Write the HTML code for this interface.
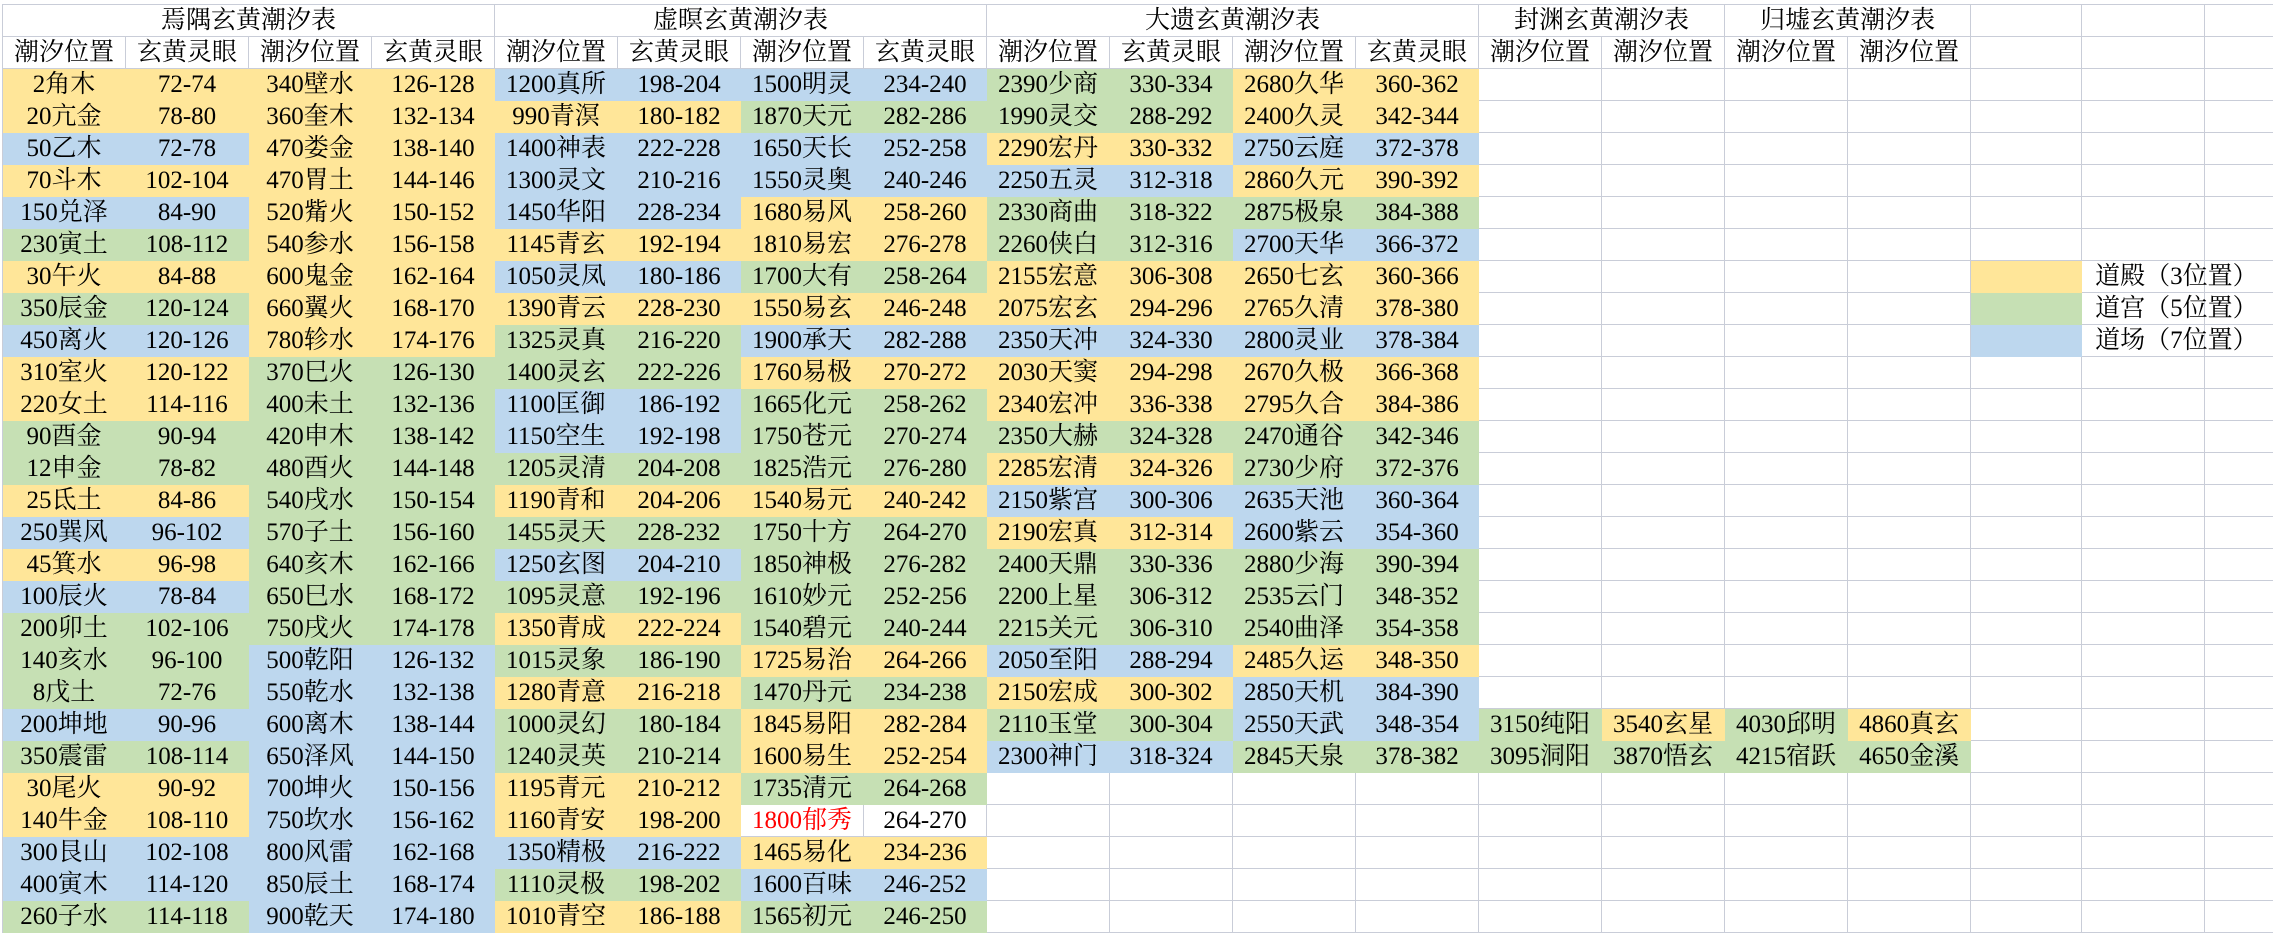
<!DOCTYPE html>
<html><head><meta charset="utf-8"><style>
html,body{margin:0;padding:0;background:#fff;width:2273px;height:938px;overflow:hidden}
table{position:absolute;left:2px;top:4px;border-collapse:separate;border-spacing:0;border-top:1px solid #c9cdd8;border-left:1px solid #c9cdd8;table-layout:fixed;width:2340px}
td{height:31px;padding:0;border-right:1px solid #c9cdd8;border-bottom:1px solid #c9cdd8;text-align:center;white-space:nowrap;overflow:visible;font-family:"Liberation Serif","Noto Serif CJK SC",serif;font-size:25px;line-height:31px;color:#000}
.y{background:#FFE699;border-color:#FFE699}
.g{background:#C6E0B4;border-color:#C6E0B4}
.b{background:#BDD7EE;border-color:#BDD7EE}
.t{background:#fff}
.l{text-align:left;padding-left:13px;overflow:visible}
.r{color:#ff0000}
</style></head><body>
<table>
<colgroup><col style="width:123px"><col style="width:123px"><col style="width:123px"><col style="width:123px"><col style="width:123px"><col style="width:123px"><col style="width:123px"><col style="width:123px"><col style="width:123px"><col style="width:123px"><col style="width:123px"><col style="width:123px"><col style="width:123px"><col style="width:123px"><col style="width:123px"><col style="width:123px"><col style="width:111px"><col style="width:123px"><col style="width:138px"></colgroup>
<tr><td colspan="4" class="t">焉隅玄黄潮汐表</td><td colspan="4" class="t">虚暝玄黄潮汐表</td><td colspan="4" class="t">大遗玄黄潮汐表</td><td colspan="2" class="t">封渊玄黄潮汐表</td><td colspan="2" class="t">归墟玄黄潮汐表</td><td></td><td></td><td></td></tr>
<tr><td>潮汐位置</td><td>玄黄灵眼</td><td>潮汐位置</td><td>玄黄灵眼</td><td>潮汐位置</td><td>玄黄灵眼</td><td>潮汐位置</td><td>玄黄灵眼</td><td>潮汐位置</td><td>玄黄灵眼</td><td>潮汐位置</td><td>玄黄灵眼</td><td>潮汐位置</td><td>潮汐位置</td><td>潮汐位置</td><td>潮汐位置</td><td></td><td></td><td></td></tr>
<tr><td class="y">2角木</td><td class="y">72-74</td><td class="y">340壁水</td><td class="y">126-128</td><td class="b">1200真所</td><td class="b">198-204</td><td class="b">1500明灵</td><td class="b">234-240</td><td class="g">2390少商</td><td class="g">330-334</td><td class="y">2680久华</td><td class="y">360-362</td><td></td><td></td><td></td><td></td><td></td><td></td><td></td></tr>
<tr><td class="y">20亢金</td><td class="y">78-80</td><td class="y">360奎木</td><td class="y">132-134</td><td class="y">990青溟</td><td class="y">180-182</td><td class="g">1870天元</td><td class="g">282-286</td><td class="g">1990灵交</td><td class="g">288-292</td><td class="y">2400久灵</td><td class="y">342-344</td><td></td><td></td><td></td><td></td><td></td><td></td><td></td></tr>
<tr><td class="b">50乙木</td><td class="b">72-78</td><td class="y">470娄金</td><td class="y">138-140</td><td class="b">1400神表</td><td class="b">222-228</td><td class="b">1650天长</td><td class="b">252-258</td><td class="y">2290宏丹</td><td class="y">330-332</td><td class="b">2750云庭</td><td class="b">372-378</td><td></td><td></td><td></td><td></td><td></td><td></td><td></td></tr>
<tr><td class="y">70斗木</td><td class="y">102-104</td><td class="y">470胃土</td><td class="y">144-146</td><td class="b">1300灵文</td><td class="b">210-216</td><td class="b">1550灵奥</td><td class="b">240-246</td><td class="b">2250五灵</td><td class="b">312-318</td><td class="y">2860久元</td><td class="y">390-392</td><td></td><td></td><td></td><td></td><td></td><td></td><td></td></tr>
<tr><td class="b">150兑泽</td><td class="b">84-90</td><td class="y">520觜火</td><td class="y">150-152</td><td class="b">1450华阳</td><td class="b">228-234</td><td class="y">1680易风</td><td class="y">258-260</td><td class="g">2330商曲</td><td class="g">318-322</td><td class="g">2875极泉</td><td class="g">384-388</td><td></td><td></td><td></td><td></td><td></td><td></td><td></td></tr>
<tr><td class="g">230寅土</td><td class="g">108-112</td><td class="y">540参水</td><td class="y">156-158</td><td class="y">1145青玄</td><td class="y">192-194</td><td class="y">1810易宏</td><td class="y">276-278</td><td class="g">2260侠白</td><td class="g">312-316</td><td class="b">2700天华</td><td class="b">366-372</td><td></td><td></td><td></td><td></td><td></td><td></td><td></td></tr>
<tr><td class="y">30午火</td><td class="y">84-88</td><td class="y">600鬼金</td><td class="y">162-164</td><td class="b">1050灵凤</td><td class="b">180-186</td><td class="g">1700大有</td><td class="g">258-264</td><td class="y">2155宏意</td><td class="y">306-308</td><td class="y">2650七玄</td><td class="y">360-366</td><td></td><td></td><td></td><td></td><td class="y"></td><td class="l">道殿（3位置）</td><td></td></tr>
<tr><td class="g">350辰金</td><td class="g">120-124</td><td class="y">660翼火</td><td class="y">168-170</td><td class="y">1390青云</td><td class="y">228-230</td><td class="y">1550易玄</td><td class="y">246-248</td><td class="y">2075宏玄</td><td class="y">294-296</td><td class="y">2765久清</td><td class="y">378-380</td><td></td><td></td><td></td><td></td><td class="g"></td><td class="l">道宫（5位置）</td><td></td></tr>
<tr><td class="b">450离火</td><td class="b">120-126</td><td class="y">780轸水</td><td class="y">174-176</td><td class="g">1325灵真</td><td class="g">216-220</td><td class="b">1900承天</td><td class="b">282-288</td><td class="b">2350天冲</td><td class="b">324-330</td><td class="b">2800灵业</td><td class="b">378-384</td><td></td><td></td><td></td><td></td><td class="b"></td><td class="l">道场（7位置）</td><td></td></tr>
<tr><td class="y">310室火</td><td class="y">120-122</td><td class="g">370巳火</td><td class="g">126-130</td><td class="g">1400灵玄</td><td class="g">222-226</td><td class="y">1760易极</td><td class="y">270-272</td><td class="y">2030天窦</td><td class="y">294-298</td><td class="y">2670久极</td><td class="y">366-368</td><td></td><td></td><td></td><td></td><td></td><td></td><td></td></tr>
<tr><td class="y">220女土</td><td class="y">114-116</td><td class="g">400未土</td><td class="g">132-136</td><td class="b">1100匡御</td><td class="b">186-192</td><td class="g">1665化元</td><td class="g">258-262</td><td class="y">2340宏冲</td><td class="y">336-338</td><td class="y">2795久合</td><td class="y">384-386</td><td></td><td></td><td></td><td></td><td></td><td></td><td></td></tr>
<tr><td class="g">90酉金</td><td class="g">90-94</td><td class="g">420申木</td><td class="g">138-142</td><td class="b">1150空生</td><td class="b">192-198</td><td class="g">1750苍元</td><td class="g">270-274</td><td class="g">2350大赫</td><td class="g">324-328</td><td class="g">2470通谷</td><td class="g">342-346</td><td></td><td></td><td></td><td></td><td></td><td></td><td></td></tr>
<tr><td class="g">12申金</td><td class="g">78-82</td><td class="g">480酉火</td><td class="g">144-148</td><td class="g">1205灵清</td><td class="g">204-208</td><td class="g">1825浩元</td><td class="g">276-280</td><td class="y">2285宏清</td><td class="y">324-326</td><td class="g">2730少府</td><td class="g">372-376</td><td></td><td></td><td></td><td></td><td></td><td></td><td></td></tr>
<tr><td class="y">25氐土</td><td class="y">84-86</td><td class="g">540戌水</td><td class="g">150-154</td><td class="y">1190青和</td><td class="y">204-206</td><td class="y">1540易元</td><td class="y">240-242</td><td class="b">2150紫宫</td><td class="b">300-306</td><td class="b">2635天池</td><td class="b">360-364</td><td></td><td></td><td></td><td></td><td></td><td></td><td></td></tr>
<tr><td class="b">250巽风</td><td class="b">96-102</td><td class="g">570子土</td><td class="g">156-160</td><td class="g">1455灵天</td><td class="g">228-232</td><td class="g">1750十方</td><td class="g">264-270</td><td class="y">2190宏真</td><td class="y">312-314</td><td class="b">2600紫云</td><td class="b">354-360</td><td></td><td></td><td></td><td></td><td></td><td></td><td></td></tr>
<tr><td class="y">45箕水</td><td class="y">96-98</td><td class="g">640亥木</td><td class="g">162-166</td><td class="b">1250玄图</td><td class="b">204-210</td><td class="g">1850神极</td><td class="g">276-282</td><td class="g">2400天鼎</td><td class="g">330-336</td><td class="g">2880少海</td><td class="g">390-394</td><td></td><td></td><td></td><td></td><td></td><td></td><td></td></tr>
<tr><td class="b">100辰火</td><td class="b">78-84</td><td class="g">650巳水</td><td class="g">168-172</td><td class="g">1095灵意</td><td class="g">192-196</td><td class="g">1610妙元</td><td class="g">252-256</td><td class="g">2200上星</td><td class="g">306-312</td><td class="g">2535云门</td><td class="g">348-352</td><td></td><td></td><td></td><td></td><td></td><td></td><td></td></tr>
<tr><td class="g">200卯土</td><td class="g">102-106</td><td class="g">750戌火</td><td class="g">174-178</td><td class="y">1350青成</td><td class="y">222-224</td><td class="g">1540碧元</td><td class="g">240-244</td><td class="g">2215关元</td><td class="g">306-310</td><td class="g">2540曲泽</td><td class="g">354-358</td><td></td><td></td><td></td><td></td><td></td><td></td><td></td></tr>
<tr><td class="g">140亥水</td><td class="g">96-100</td><td class="b">500乾阳</td><td class="b">126-132</td><td class="g">1015灵象</td><td class="g">186-190</td><td class="y">1725易治</td><td class="y">264-266</td><td class="b">2050至阳</td><td class="b">288-294</td><td class="y">2485久运</td><td class="y">348-350</td><td></td><td></td><td></td><td></td><td></td><td></td><td></td></tr>
<tr><td class="g">8戊土</td><td class="g">72-76</td><td class="b">550乾水</td><td class="b">132-138</td><td class="y">1280青意</td><td class="y">216-218</td><td class="g">1470丹元</td><td class="g">234-238</td><td class="y">2150宏成</td><td class="y">300-302</td><td class="b">2850天机</td><td class="b">384-390</td><td></td><td></td><td></td><td></td><td></td><td></td><td></td></tr>
<tr><td class="b">200坤地</td><td class="b">90-96</td><td class="b">600离木</td><td class="b">138-144</td><td class="g">1000灵幻</td><td class="g">180-184</td><td class="y">1845易阳</td><td class="y">282-284</td><td class="g">2110玉堂</td><td class="g">300-304</td><td class="b">2550天武</td><td class="b">348-354</td><td class="g">3150纯阳</td><td class="y">3540玄星</td><td class="g">4030邱明</td><td class="y">4860真玄</td><td></td><td></td><td></td></tr>
<tr><td class="g">350震雷</td><td class="g">108-114</td><td class="b">650泽风</td><td class="b">144-150</td><td class="g">1240灵英</td><td class="g">210-214</td><td class="y">1600易生</td><td class="y">252-254</td><td class="b">2300神门</td><td class="b">318-324</td><td class="g">2845天泉</td><td class="g">378-382</td><td class="g">3095洞阳</td><td class="g">3870悟玄</td><td class="g">4215宿跃</td><td class="g">4650金溪</td><td></td><td></td><td></td></tr>
<tr><td class="y">30尾火</td><td class="y">90-92</td><td class="b">700坤火</td><td class="b">150-156</td><td class="y">1195青元</td><td class="y">210-212</td><td class="g">1735清元</td><td class="g">264-268</td><td></td><td></td><td></td><td></td><td></td><td></td><td></td><td></td><td></td><td></td><td></td></tr>
<tr><td class="y">140牛金</td><td class="y">108-110</td><td class="b">750坎水</td><td class="b">156-162</td><td class="y">1160青安</td><td class="y">198-200</td><td class="r">1800郁秀</td><td>264-270</td><td></td><td></td><td></td><td></td><td></td><td></td><td></td><td></td><td></td><td></td><td></td></tr>
<tr><td class="b">300艮山</td><td class="b">102-108</td><td class="b">800风雷</td><td class="b">162-168</td><td class="b">1350精极</td><td class="b">216-222</td><td class="y">1465易化</td><td class="y">234-236</td><td></td><td></td><td></td><td></td><td></td><td></td><td></td><td></td><td></td><td></td><td></td></tr>
<tr><td class="b">400寅木</td><td class="b">114-120</td><td class="b">850辰土</td><td class="b">168-174</td><td class="g">1110灵极</td><td class="g">198-202</td><td class="b">1600百味</td><td class="b">246-252</td><td></td><td></td><td></td><td></td><td></td><td></td><td></td><td></td><td></td><td></td><td></td></tr>
<tr><td class="g">260子水</td><td class="g">114-118</td><td class="b">900乾天</td><td class="b">174-180</td><td class="y">1010青空</td><td class="y">186-188</td><td class="g">1565初元</td><td class="g">246-250</td><td></td><td></td><td></td><td></td><td></td><td></td><td></td><td></td><td></td><td></td><td></td></tr>
</table>
</body></html>
